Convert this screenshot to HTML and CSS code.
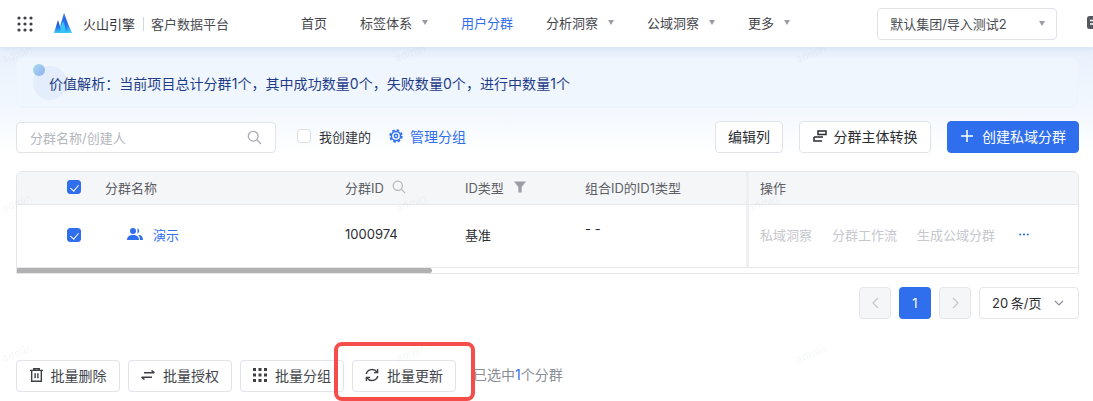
FILE: index.html
```html
<!DOCTYPE html>
<html lang="zh-CN">
<head>
  <meta charset="UTF-8" />
  <title>用户分群</title>
  <link rel="stylesheet" href="styles.css">
</head>
<body>
  <header class="topbar">
    <svg class="apps" width="16" height="16" viewBox="0 0 16 16" fill="#3d3f45">
      <circle cx="2" cy="2" r="1.6"/><circle cx="8" cy="2" r="1.6"/><circle cx="14" cy="2" r="1.6"/>
      <circle cx="2" cy="8" r="1.6"/><circle cx="8" cy="8" r="1.6"/><circle cx="14" cy="8" r="1.6"/>
      <circle cx="2" cy="14" r="1.6"/><circle cx="8" cy="14" r="1.6"/><circle cx="14" cy="14" r="1.6"/>
    </svg>
    <svg class="logo" width="18" height="20" viewBox="0 0 18 20">
      <defs>
        <linearGradient id="flame" x1="0" y1="0" x2="0" y2="1">
          <stop offset="0" stop-color="#1f3fb8"/><stop offset="0.6" stop-color="#2478ee"/><stop offset="1" stop-color="#38d0f5"/>
        </linearGradient>
      </defs>
      <path d="M10 0 L14.5 12 L18 20 H12 Z" fill="url(#flame)"/>
      <path d="M10 0 L6.5 12 L6 20 H12 L12.5 12 Z" fill="#2a6ee8"/>
      <path d="M4 7 L6.5 15 L6 20 H0 Z" fill="url(#flame)"/>
      <path d="M7 13 L9 8 L11 13 L12 20 H6 Z" fill="#36c8f4"/>
    </svg>
    <span class="brand">火山引擎</span>
    <span class="brand-sub">客户数据平台</span>
    <nav class="nav">
      <a class="nav-item">首页</a>
      <a class="nav-item">标签体系<i class="caret"></i></a>
      <a class="nav-item active">用户分群</a>
      <a class="nav-item">分析洞察<i class="caret"></i></a>
      <a class="nav-item">公域洞察<i class="caret"></i></a>
      <a class="nav-item">更多<i class="caret"></i></a>
    </nav>
    <div class="org-select">默认集团/导入测试2<i class="caret"></i></div>
    <svg class="msg" width="16" height="16" viewBox="0 0 16 16"><rect width="16" height="13" rx="2.5" fill="#55585f"/><path d="M3 4.5h7M3 8h7" stroke="#fff" stroke-width="1.5"/></svg>
  </header>

  <main class="content">
    <div class="banner">
      <i class="deco-ring"></i>
      <i class="deco-ball"></i>
      <span class="banner-text">价值解析：当前项目总计分群1个，其中成功数量0个，失败数量0个，进行中数量1个</span>
    </div>

    <div class="toolbar">
      <div class="search">
        <span>分群名称/创建人</span>
        <svg width="15" height="15" viewBox="0 0 15 15" fill="none" stroke="#a9acb3" stroke-width="1.3"><circle cx="6.2" cy="6.2" r="4.9"/><path d="M9.8 9.8l4.2 4.2"/></svg>
      </div>
      <label class="mine"><i class="box"></i>我创建的</label>
      <a class="manage">
        <svg width="14" height="14" viewBox="0 0 14 14" fill="none" stroke="#2f6fed"><circle cx="7" cy="7" r="4.6" stroke-width="1.5"/><circle cx="7" cy="7" r="5.9" stroke-width="1.6" stroke-dasharray="2.6 2.03"/><circle cx="7" cy="7" r="1.7" stroke-width="1.4"/></svg>
        管理分组
      </a>
      <div class="toolbar-right">
        <button class="btn btn-cols">编辑列</button>
        <button class="btn btn-convert">
          <svg width="14" height="12" viewBox="0 0 14 12" fill="none" stroke="#2b2d33" stroke-width="1.5"><path d="M5 1h8v3.5H5zM1 7h9M1 7v4h8"/></svg>
          分群主体转换
        </button>
        <button class="btn btn-primary">
          <svg width="14" height="14" viewBox="0 0 14 14" stroke="#fff" stroke-width="1.5"><path d="M7 1v12M1 7h12"/></svg>
          创建私域分群
        </button>
      </div>
    </div>

    <div class="table">
      <div class="tr th">
        <div class="cell cell-check"><i class="box checked"></i></div>
        <div class="cell">分群名称</div>
        <div class="cell">分群ID
          <svg class="th-icon" width="14" height="14" viewBox="0 0 15 15" fill="none" stroke="#b4b7bd" stroke-width="1.3"><circle cx="6.2" cy="6.2" r="4.9"/><path d="M9.8 9.8l4.2 4.2"/></svg>
        </div>
        <div class="cell">ID类型
          <svg class="th-icon th-filter" width="12" height="12" viewBox="0 0 12 12" fill="#9a9da4"><path d="M0 .5h12L7.6 6v5.5H4.4V6z"/></svg>
        </div>
        <div class="cell">组合ID的ID1类型</div>
        <div class="cell cell-fixed">操作</div>
      </div>
      <div class="tr td">
        <div class="cell cell-check"><i class="box checked"></i></div>
        <div class="cell cell-name">
          <svg width="16" height="12" viewBox="0 0 16 12" fill="#2f6fed"><circle cx="6" cy="3" r="3"/><path d="M0 12c0-3.4 2.4-5 6-5s6 1.600 6 5z"/><path d="M10.500.300a3 3 0 0 1 0 5.400zM11 6.800c3 .2 5 1.700 5 5.200h-3c0-2-.6-3.800-2-5.200z"/></svg>
          <a>演示</a>
        </div>
        <div class="cell">1000974</div>
        <div class="cell">基准</div>
        <div class="cell cell-dash">- -</div>
        <div class="cell cell-fixed cell-ops">
          <span>私域洞察</span><span>分群工作流</span><span>生成公域分群</span>
          <svg class="dots" width="10" height="3" viewBox="0 0 10 3" fill="#2f6fed"><circle cx="1.200" cy="1.500" r="1.100"/><circle cx="5" cy="1.500" r="1.100"/><circle cx="8.800" cy="1.500" r="1.100"/></svg>
        </div>
      </div>
      <div class="scrollbar"><i></i></div>
    </div>

    <div class="pager">
      <span class="page page-off"><svg width="7" height="12" viewBox="0 0 7 12" fill="none" stroke="#c4c7ce" stroke-width="1.200"><path d="M6 1L1 6l5 5"/></svg></span>
      <span class="page page-on">1</span>
      <span class="page page-off"><svg width="7" height="12" viewBox="0 0 7 12" fill="none" stroke="#c4c7ce" stroke-width="1.200"><path d="M1 1l5 5-5 5"/></svg></span>
      <div class="size">20 条/页
        <svg width="10" height="6" viewBox="0 0 10 6" fill="none" stroke="#8b8e96" stroke-width="1.200"><path d="M1 1l4 4 4-4"/></svg>
      </div>
    </div>

    <div class="batch">
      <button class="btn btn-batch">
        <svg width="13" height="14" viewBox="0 0 14 15" fill="none" stroke="#3d3f45" stroke-width="1.500"><path d="M0 2.500h14M4 2.500V.8h6v1.700M1.800 2.500v11.700h10.400V2.500M5.500 5.500v5.500M8.500 5.500v5.500"/></svg>
        批量删除
      </button>
      <button class="btn btn-batch">
        <svg width="14" height="10" viewBox="0 0 14 10" fill="none" stroke="#3d3f45" stroke-width="1.500"><path d="M3 2.800h10M13.500 2.800L10.500.5M11 7.200H1M.5 7.200l3 2.300"/></svg>
        批量授权
      </button>
      <button class="btn btn-batch">
        <svg width="14" height="14" viewBox="0 0 14 14" fill="#3d3f45">
          <rect width="3" height="3"/><rect x="5.500" width="3" height="3"/><rect x="11" width="3" height="3"/>
          <rect y="5.500" width="3" height="3"/><rect x="5.500" y="5.500" width="3" height="3"/><rect x="11" y="5.500" width="3" height="3"/>
          <rect y="11" width="3" height="3"/><rect x="5.500" y="11" width="3" height="3"/><rect x="11" y="11" width="3" height="3"/>
        </svg>
        批量分组
      </button>
      <button class="btn btn-batch">
        <svg width="14" height="14" viewBox="0 0 14 14" fill="none" stroke="#3d3f45" stroke-width="1.400"><path d="M1.200 6A6 6 0 0 1 12 4.200M12.800 8A6 6 0 0 1 2 9.800"/><path d="M12.600 1v3.600H9M1.400 13V9.400H5"/></svg>
        批量更新
      </button>
      <span class="picked">已选中<em>1</em>个分群</span>
      <i class="callout"></i>
    </div>
  </main>

  <span class="mark mark-1">admin</span>
  <span class="mark mark-2">admin</span>
  <span class="mark mark-3">admin</span>
  <span class="mark mark-4">admin</span>
  <span class="mark mark-5">admin</span>
  <span class="mark mark-6">admin</span>
  <span class="mark mark-7">admin</span>
  <span class="mark mark-8">admin</span>
  <span class="mark mark-9">admin</span>
</body>
</html>
```

FILE: styles.css
```css
* {
  box-sizing: border-box;
}

html, body {
  margin: 0;
  height: 401px;
  overflow: hidden;
}

body {
  position: relative;
  font-family: Inter, "Noto Sans CJK SC", sans-serif;
  font-size: 13px;
  color: #2b2d33;
  background-color: #fff;
  white-space: nowrap;
}

i, em {
  font-style: normal;
}

/* top bar */
.topbar {
  position: relative;
  z-index: 2;
  display: flex;
  align-items: center;
  height: 47px;
  padding-left: 17px;
  background-color: #fff;
  box-shadow: 0 2px 6px rgba(60, 90, 140, 0.1);
}

.topbar svg {
  flex-shrink: 0;
}

.logo {
  margin-left: 21px;
  margin-top: -1px;
}

.brand {
  margin-left: 11px;
  padding-bottom: 1px;
  color: #33353b;
}

.brand-sub {
  margin-left: 8px;
  padding-left: 8px;
  padding-bottom: 1px;
  color: #4a4c52;
  background: linear-gradient(#d5d7dc, #d5d7dc) left center / 1px 14px no-repeat;
}

.nav {
  display: flex;
  flex-shrink: 0;
  margin-left: 72px;
  padding-bottom: 2px;
}

.nav-item {
  display: flex;
  align-items: center;
  margin-right: 33px;
  color: #44464c;
}

.nav-item.active {
  color: #2f6fed;
}

.caret {
  width: 0;
  height: 0;
  margin-left: 10px;
  border-left: 3.500px solid transparent;
  border-right: 3.500px solid transparent;
  border-top: 5px solid #9a9da4;
}

.org-select {
  display: flex;
  align-items: center;
  justify-content: space-between;
  flex-shrink: 0;
  width: 180px;
  height: 32px;
  margin-left: 54px;
  padding: 0 11px 1px 12px;
  color: #4a4c52;
  border: 1px solid #e1e3e8;
  border-radius: 4px;
}

.msg {
  margin-left: 30px;
}

/* page body */
.content {
  height: 354px;
  padding: 10px 14px 0 16px;
  background: linear-gradient(#e7f1fc 0, #f3f8fe 65px, #fff 105px);
}

.banner {
  position: relative;
  display: flex;
  align-items: center;
  height: 51px;
  margin-right: 1px;
  padding-left: 32px;
  background-color: #eff6fe;
  border: 1px solid #edf4fd;
  border-radius: 8px;
}

.deco-ring {
  position: absolute;
  left: 16px;
  top: 8px;
  width: 34px;
  height: 34px;
  background-color: #e3edfc;
  border-radius: 50%;
}

.deco-ball {
  position: absolute;
  left: 16px;
  top: 6px;
  width: 12px;
  height: 12px;
  border-radius: 50%;
  background: linear-gradient(135deg, #a8dcec, #8fb0f2);
}

.banner-text {
  position: relative;
  font-size: 14px;
  letter-spacing: 0.05px;
  color: #1f3c88;
}

.toolbar {
  display: flex;
  align-items: center;
  height: 32px;
  margin-top: 13px;
}

.search {
  display: flex;
  align-items: center;
  justify-content: space-between;
  width: 260px;
  height: 31px;
  padding: 0 13px;
  color: #b4b7bd;
  background-color: #fff;
  border: 1px solid #e1e3e8;
  border-radius: 4px;
}

.box {
  display: inline-block;
  width: 14px;
  height: 14px;
  background-color: #fff;
  border: 1px solid #dcdee3;
  border-radius: 3px;
}

.box.checked {
  position: relative;
  background-color: #2f6fed;
  border-color: #2f6fed;
}

.box.checked::after {
  content: "";
  position: absolute;
  left: 3.500px;
  top: 1.500px;
  width: 4px;
  height: 7px;
  border: solid #fff;
  border-width: 0 1.500px 1.500px 0;
  transform: rotate(40deg);
}

.mine {
  display: flex;
  align-items: center;
  gap: 8px;
  margin-left: 21px;
  padding-bottom: 2px;
  color: #33353b;
}

.manage {
  display: flex;
  align-items: center;
  gap: 7px;
  margin-left: 18px;
  padding-bottom: 3px;
  font-size: 14px;
  color: #2f6fed;
}

.toolbar-right {
  display: flex;
  gap: 16px;
  margin-left: auto;
}

.btn {
  display: inline-flex;
  align-items: center;
  justify-content: center;
  height: 32px;
  padding: 0 0 2px;
  font: inherit;
  font-size: 14px;
  color: #2b2d33;
  background-color: #fff;
  border: 1px solid #e1e3e8;
  border-radius: 4px;
}

.btn-cols {
  width: 68px;
}

.btn-convert {
  width: 132px;
  gap: 7px;
}

.btn-primary {
  width: 132px;
  gap: 8px;
  color: #fff;
  background-color: #2f6fed;
  border-color: #2f6fed;
}

/* table */
.table {
  height: 103px;
  margin-top: 18px;
  background-color: #fff;
  border: 1px solid #e4e6ea;
  border-radius: 6px 6px 0 0;
  overflow: hidden;
}

.tr {
  display: grid;
  grid-template-columns: 88px 240px 120px 120px 161px 1fr;
  border-bottom: 1px solid #e8e9ed;
}

.th {
  height: 33px;
  color: #5e6066;
  background-color: #f5f6f8;
}

.td {
  height: 63px;
}

.cell {
  display: flex;
  align-items: center;
  min-width: 0;
  padding-bottom: 2px;
}

.td .cell {
  padding-bottom: 4px;
}

.td .cell-check {
  padding-bottom: 2px;
}

.cell-check {
  padding-left: 50px;
}

.th-icon {
  margin-left: 8px;
}

.th-filter {
  margin-left: 10px;
}

.cell-name {
  gap: 10px;
  padding-left: 22px;
}

.cell-name a {
  color: #2f6fed;
}

.td .cell-dash {
  padding-bottom: 15px;
}

.cell-fixed {
  padding-left: 11px;
  border-left: 3px solid #eeeff2;
}

.cell-ops {
  gap: 20px;
  color: #c6c8cd;
}

.dots {
  margin-left: 4px;
}

.scrollbar {
  height: 6px;
}

.scrollbar i {
  display: block;
  width: 415px;
  height: 5px;
  background-color: #b1b1b1;
  border-radius: 0 3px 3px 0;
}

/* pagination */
.pager {
  display: flex;
  justify-content: flex-end;
  gap: 8px;
  margin-top: 13px;
}

.page {
  display: flex;
  align-items: center;
  justify-content: center;
  width: 32px;
  height: 32px;
  border-radius: 4px;
}

.page-off {
  background-color: #f5f6f8;
  border: 1px solid #e4e6ea;
}

.page-on {
  color: #fff;
  background-color: #2f6fed;
}

.size {
  display: flex;
  align-items: center;
  justify-content: space-between;
  width: 100px;
  height: 32px;
  padding: 0 14px 1px 12px;
  word-spacing: -1px;
  border: 1px solid #e4e6ea;
  border-radius: 4px;
}

/* batch actions */
.batch {
  position: relative;
  display: flex;
  align-items: center;
  gap: 8px;
  margin-top: 41px;
}

.btn-batch {
  width: 104px;
  gap: 8px;
  padding-bottom: 3px;
  color: #44464c;
}

.picked {
  margin-left: 9px;
  padding-bottom: 4px;
  font-size: 14px;
  color: #8b8e96;
}

.picked em {
  color: #2f6fed;
}

/* red box drawn over the screenshot */
.callout {
  position: absolute;
  left: 318px;
  top: -18px;
  width: 141px;
  height: 59px;
  border: 4px solid #f44d4a;
  border-radius: 8px;
}

/* watermark */
.mark {
  position: absolute;
  z-index: 3;
  font-size: 11px;
  color: rgba(120, 130, 150, 0.09);
  transform: rotate(-20deg);
  pointer-events: none;
}

.mark-1 { left: 1px; top: 47px; }
.mark-2 { left: 394px; top: 46px; }
.mark-3 { left: 795px; top: 47px; }
.mark-4 { left: 1px; top: 196px; }
.mark-5 { left: 395px; top: 196px; }
.mark-6 { left: 747px; top: 196px; }
.mark-7 { left: 1px; top: 346px; }
.mark-8 { left: 395px; top: 346px; }
.mark-9 { left: 795px; top: 347px; }
```
